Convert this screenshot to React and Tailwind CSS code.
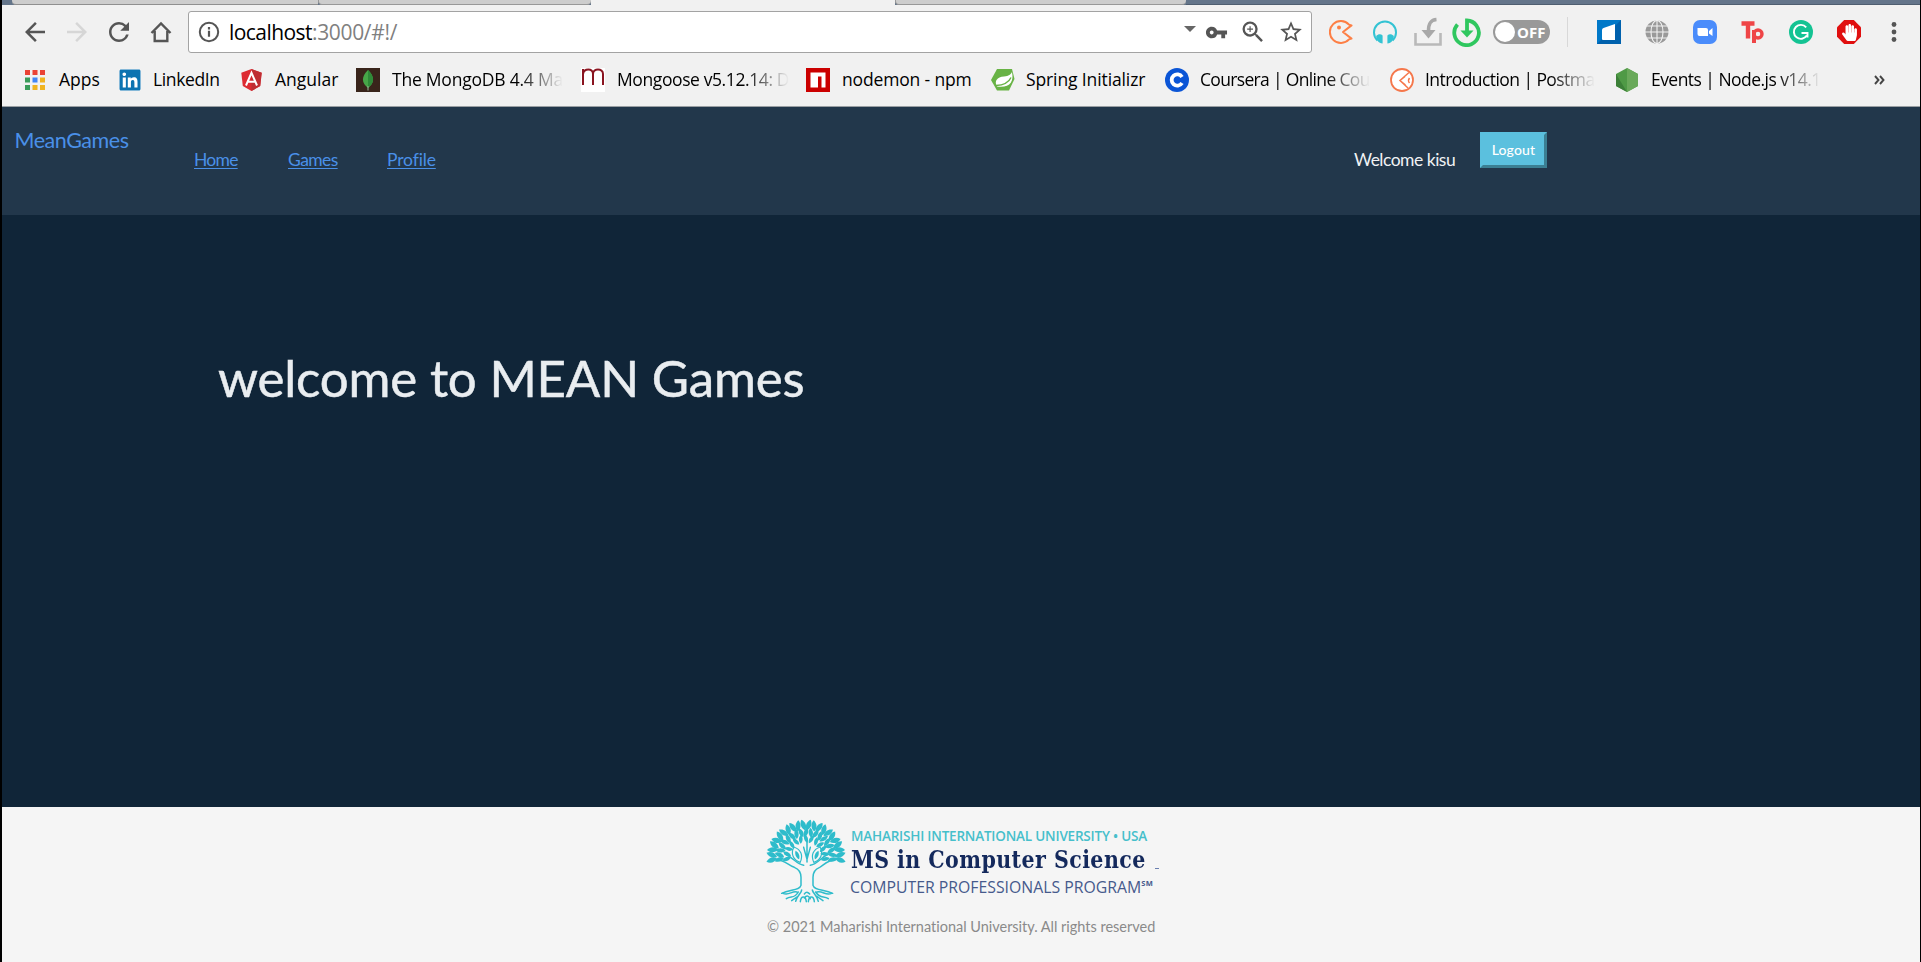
import React, { useLayoutEffect, useRef, useState } from "react";
import { MdArrowBack, MdArrowForward, MdRefresh, MdVpnKey, MdZoomIn, MdStarBorder } from "react-icons/md";
import { FaLinkedin, FaHandPaper } from "react-icons/fa";

// Adjusts letter spacing so that a single line of text fills `w` pixels.
function Fit({ w, className = "", children }) {
  const ref = useRef(null);
  const [spacing, setSpacing] = useState(0);
  useLayoutEffect(() => {
    const el = ref.current;
    const natural = el.offsetWidth;
    setSpacing((w - natural) / el.textContent.length);
  }, [w]);
  return (
    <span ref={ref} className={"inline-block whitespace-nowrap " + className} style={{ letterSpacing: spacing + "px" }}>
      {children}
    </span>
  );
}

function Svg({ w, h, className = "", children }) {
  return (
    <svg width={w} height={h} viewBox={`0 0 ${w} ${h}`} className={"block shrink-0 " + className} fill="none">
      {children}
    </svg>
  );
}

function TabStrip() {
  return (
    <div className="flex h-[5px] bg-[#64758a]">
      <div className="ml-[10px] h-[5px] w-[306px] rounded-bl-[4px] border-b border-[#8f8f8f] bg-[#cdcdcd]" />
      <div className="h-[5px] w-[273px] rounded-b-[4px] border-b border-l border-[#989898] bg-[#cdcdcd]" />
      <div className="h-[5px] w-[304px] bg-[#f1f1f1]" />
      <div className="h-[5px] w-[291px] rounded-b-[4px] border-b border-l border-[#989898] bg-[#cdcdcd]" />
      <div className="h-[5px] flex-1 border-b border-[#4f5e70] bg-[#64758a]" />
    </div>
  );
}

function Toolbar() {
  return (
    <div className="flex h-[54px] items-center text-[#555]">
      <MdArrowBack size={30} className="ml-[18px] shrink-0" />
      <MdArrowForward size={30} className="ml-3 shrink-0 text-[#d6d6d6]" />
      <MdRefresh size={30} className="ml-3 shrink-0" />
      <Svg w={22} h={22} className="ml-[16px]">
        <path d="M1.5 12 11 2.5 20.5 12M4.7 10v10h12.6V10" stroke="#555" strokeWidth="2.4" />
      </Svg>

      <div className="ml-[16px] flex h-[42px] w-[1124px] shrink-0 items-center rounded-[3px] border border-[#a3a3a3] bg-white">
        <Svg w={22} h={22} className="ml-[9px]">
          <circle cx="11" cy="11" r="9.2" stroke="#555" strokeWidth="2" />
          <path d="M11 9.8v6M11 6v2.4" stroke="#555" strokeWidth="2.2" />
        </Svg>
        <span className="ml-[9px] w-[170px] text-[21px] leading-7 text-[#808080]">
          <Fit w={83} className="text-black">localhost</Fit>
          <Fit w={85}>:3000/#!/</Fit>
        </span>
        <Svg w={12} h={6} className="mb-[6px] ml-[785px]">
          <path d="M0 0h12L6 6z" fill="#666" />
        </Svg>
        <MdVpnKey size={23} className="ml-[9px] shrink-0" />
        <MdZoomIn size={28} className="ml-[11px] shrink-0" />
        <MdStarBorder size={26} className="ml-[11px] shrink-0" />
      </div>

      <Svg w={24} h={24} className="ml-[17px]">
        <path d="M20 4.600A11 11 0 1 0 20 19.400L22.500 18.600 14 12 22.500 5.400Z" stroke="#fd7f45" strokeWidth="2" strokeLinejoin="round" />
        <circle cx="10" cy="7.5" r="2" fill="#fd7f45" />
      </Svg>
      <Svg w={24} h={24} className="ml-5">
        <path d="M4.500 20.500a11 11 0 1 1 15 0" stroke="#33c3d3" strokeWidth="2" />
        <path d="M9.600 15.500v8C5.500 23 3 20 3.200 16 5 14 8 13.800 9.600 15.500ZM14.400 15.500v8c4.100-.5 6.600-3.500 6.400-7.500-1.800-2-4.800-2.200-6.400-.5Z" fill="#33c3d3" />
      </Svg>
      <Svg w={28} h={30} className="ml-[17px]">
        <path d="M1.500 16v11.500h25V16" stroke="#b9b9b9" strokeWidth="2.600" />
        <path d="M22.500 2.500C16 3 14.500 7 14.500 14" stroke="#a8a8a8" strokeWidth="3.600" />
        <path d="M7.500 13h14l-7 8.500Z" fill="#a8a8a8" />
      </Svg>
      <Svg w={30} h={30} className="ml-[10px]">
        <path d="M5.500 7.500A12.300 12.300 0 1 0 15 3.500V17" stroke="#2fc75f" strokeWidth="3.800" />
        <path d="M8.500 13.500h13L15 20.500Z" fill="#2fc75f" />
      </Svg>
      <div className="ml-[11px] flex h-6 w-[57px] shrink-0 items-center rounded-full bg-[#999]">
        <span className="ml-[2px] size-5 rounded-full bg-white" />
        <Fit w={28} className="ml-[2px] text-[15px] leading-6 font-bold text-white">OFF</Fit>
      </div>
      <div className="ml-[17px] h-[30px] w-px bg-[#d8d8d8]" />
      <Svg w={24} h={24} className="ml-[29px]">
        <rect width="24" height="24" fill="#0078c8" />
        <path d="M0 24 24 0v24Z" fill="#0061ad" />
        <path d="M5 10Q5 8.500 6.500 8L18 4v16H6Q5 20 5 19Z" fill="#fff" />
      </Svg>
      <Svg w={24} h={24} className="ml-6">
        <circle cx="12" cy="12" r="11.500" fill="#999" />
        <path d="M12 0v24M0 12h24M2 6h20M2 18h20" stroke="#f1f1f1" strokeWidth="1.100" />
        <ellipse cx="12" cy="12" rx="6" ry="11.500" stroke="#f1f1f1" strokeWidth="1.100" />
      </Svg>
      <Svg w={24} h={24} className="ml-6">
        <rect width="24" height="24" rx="7" fill="#4a8cfb" />
        <path d="M4.500 8h8.500q2 0 2 2v6H6.500q-2 0-2-2ZM16 11l3.500-3v8L16 13.500Z" fill="#fff" />
      </Svg>
      <Svg w={24} h={24} className="ml-6">
        <path d="M.5 3.500h13M7 2v16.500" stroke="#ef4547" strokeWidth="4.400" />
        <path d="M13 10v13" stroke="#ef4547" strokeWidth="4" />
        <circle cx="17" cy="14" r="4" stroke="#ef4547" strokeWidth="3.400" />
      </Svg>
      <Svg w={24} h={24} className="ml-6">
        <circle cx="12" cy="12" r="12" fill="#14c393" />
        <path d="M17.200 7.300a7 7 0 1 0 .6 8.300M12.500 13h6v4.500" stroke="#fff" strokeWidth="1.900" />
      </Svg>
      <span className="ml-6 flex size-6 shrink-0 items-center justify-center bg-[#e00f0f] text-white [clip-path:polygon(30%_0,70%_0,100%_30%,100%_70%,70%_100%,30%_100%,0_70%,0_30%)]">
        <FaHandPaper size={17} />
      </span>
      <Svg w={6} h={22} className="ml-[30px]">
        <circle cx="3" cy="3.500" r="2.400" fill="#555" />
        <circle cx="3" cy="11" r="2.400" fill="#555" />
        <circle cx="3" cy="18.500" r="2.400" fill="#555" />
      </Svg>
    </div>
  );
}

function AppsIcon() {
  const colors = ["#ea4335", "#ea4335", "#ea4335", "#3a9c5a", "#4285f4", "#f0b421", "#3a9c5a", "#f0b421", "#f0b421"];
  return (
    <Svg w={20} h={20}>
      {colors.map((c, i) => (
        <rect key={i} x={(i % 3) * 7.5} y={Math.floor(i / 3) * 7.5} width="5" height="5" fill={c} />
      ))}
    </Svg>
  );
}

const fade = "[mask-image:linear-gradient(to_right,#000_74%,transparent_100%)]";

// slot: distance to the next bookmark's icon; gap: icon to label.
const bookmarks = [
  { slot: "w-[94px]", gap: "ml-[14px]", w: 41, label: "Apps", icon: <AppsIcon /> },
  {
    slot: "w-[122px]", gap: "ml-[12px]", w: 67, label: "LinkedIn",
    icon: (
      <span className="flex h-[22px] w-[22px] items-center justify-center rounded-[3px] bg-white text-[#0c73b1]">
        <FaLinkedin size={24} className="shrink-0" />
      </span>
    ),
  },
  {
    slot: "w-[115px]", gap: "ml-[13px]", w: 63, label: "Angular",
    icon: (
      <Svg w={21} h={22}>
        <path d="M10.500 0 20.700 3.700 19.200 17 10.500 22 1.800 17 .3 3.700Z" fill="#dd2b32" />
        <path d="M10.500 0 20.700 3.700 19.200 17 10.500 22Z" fill="#bf2e33" />
        <path d="M5 16.500 10.500 3.800 16 16.500M7.200 12.800h6.600" stroke="#fff" strokeWidth="2" />
      </Svg>
    ),
  },
  {
    slot: "w-[225px]", gap: "ml-[12px]", w: 171, label: "The MongoDB 4.4 Ma", faded: true,
    icon: (
      <Svg w={24} h={24}>
        <rect width="24" height="24" fill="#39241b" />
        <path d="M12 2c7 7 6.500 13 0 18-6.500-5-7-11 0-18Z" fill="#47a548" />
        <path d="M12 2c7 7 6.500 13 0 18Z" fill="#2f8a38" />
        <path d="M12 18v4.500" stroke="#9cb89a" strokeWidth="1" />
      </Svg>
    ),
  },
  {
    slot: "w-[225px]", gap: "ml-[12px]", w: 172, label: "Mongoose v5.12.14: D", faded: true,
    icon: (
      <Svg w={24} h={24}>
        <rect width="24" height="24" fill="#fff" />
        <path d="M2 17V1M2 6C3 0 12 0 12 6v11M12 6c0-6 10-6 10 0v11" stroke="#8a1420" strokeWidth="2" />
      </Svg>
    ),
  },
  {
    slot: "w-[185px]", gap: "ml-[12px]", w: 130, label: "nodemon - npm",
    icon: (
      <Svg w={24} h={24}>
        <rect width="24" height="24" fill="#cb0000" />
        <path d="M4.500 4.500h15v15h-4V8.500H12v11H4.500Z" fill="#fff" />
      </Svg>
    ),
  },
  {
    slot: "w-[174px]", gap: "ml-[11px]", w: 119, label: "Spring Initializr",
    icon: (
      <Svg w={24} h={24}>
        <path d="M6 1h15l2.500 10L18 22.500H6L0 12Z" fill="#68b345" />
        <path d="M21 4c2 10-2 16-15 14.500C3 13 6 9 13 8.500 18 8 19.500 6.500 21 4Z" fill="#fff" />
        <path d="M5 17.500c9-.5 13-3.500 15-8" stroke="#68b345" strokeWidth="1.400" />
      </Svg>
    ),
  },
  {
    slot: "w-[225px]", gap: "ml-[11px]", w: 170, label: "Coursera | Online Cou", faded: true,
    icon: (
      <Svg w={24} h={24}>
        <circle cx="12" cy="12" r="12" fill="#0b55d6" />
        <path d="M17 9a5.600 5.600 0 1 0 0 6" stroke="#fff" strokeWidth="3.800" />
      </Svg>
    ),
  },
  {
    slot: "w-[226px]", gap: "ml-[11px]", w: 170, label: "Introduction | Postma", faded: true,
    icon: (
      <Svg w={24} h={24}>
        <circle cx="12" cy="12" r="11" fill="#fff" stroke="#f5774b" strokeWidth="1.800" />
        <path d="M19 4.500 10 12.500 18 20M15 8.500 10 12.500l5.500 4.500M19.500 10q-2 2.500 0 5" stroke="#f5774b" strokeWidth="1.500" />
      </Svg>
    ),
  },
  {
    slot: "w-[258px]", gap: "ml-[13px]", w: 170, label: "Events | Node.js v14.1", faded: true,
    icon: (
      <Svg w={22} h={24}>
        <path d="M11 0 22 6v12l-11 6L0 18V6Z" fill="#4f9a46" />
        <path d="M11 0 22 6v12l-11 6Z" fill="#69a95a" />
        <path d="M0 6 11 24 0 18Z" fill="#3c8038" />
      </Svg>
    ),
  },
];

function Bookmarks() {
  return (
    <div className="flex h-12 border-b border-[#9a9fa3] pl-[23px] text-[17.5px] leading-6 text-black">
      {bookmarks.map((b) => (
        <div key={b.label} className={"flex h-[42px] shrink-0 items-center " + b.slot}>
          {b.icon}
          <span className={"mb-[2px] " + b.gap + " " + (b.faded ? fade : "")}>
            <Fit w={b.w}>{b.label}</Fit>
          </span>
        </div>
      ))}
      <span className="h-[42px] pt-[10px]">
        <Svg w={11} h={22}>
          <path d="m1 7 3.500 4L1 15M6 7l3.500 4L6 15" stroke="#444" strokeWidth="1.900" />
        </Svg>
      </span>
    </div>
  );
}

function SiteHeader() {
  return (
    <header className="flex h-[108px] items-start bg-[#22374b] text-[17.500px] leading-6 text-[#4a90e8]">
      <a className="mt-[21px] ml-[12.500px] w-[179.500px] text-[21.500px]">
        <Fit w={114}>MeanGames</Fit>
      </a>
      <nav className="mt-[41px] flex w-[1159px]">
        <a className="w-[94px]"><Fit w={44} className="underline decoration-1 underline-offset-2">Home</Fit></a>
        <a className="w-[99px]"><Fit w={50} className="underline decoration-1 underline-offset-2">Games</Fit></a>
        <a><Fit w={48} className="underline decoration-1 underline-offset-2">Profile</Fit></a>
      </nav>
      <span className="mt-[41px] ml-px w-[126px] text-[#f0f2f4]">
        <Fit w={101}>Welcome kisu</Fit>
      </span>
      <button className="mt-[25px] flex h-9 w-[67px] items-center justify-center border-[3px] border-[#5bc0de] border-r-[#3b7f93] border-b-[#3b7f93] bg-[#5bc0de] text-[14px] font-medium text-white">
        <Fit w={44}>Logout</Fit>
      </button>
    </header>
  );
}

function Leaf({ x, y, a, l, hw, open }) {
  return (
    <path
      transform={`translate(${x.toFixed(1)} ${y.toFixed(1)}) rotate(${a.toFixed(1)})`}
      d={`M0 ${l / 2}C${-hw} ${l / 5} ${-hw} ${-l / 5} 0 ${-l / 2}C${hw} ${-l / 5} ${hw} ${l / 5} 0 ${l / 2}Z`}
      fill={open ? "none" : "#2ebccb"}
      stroke={open ? "#2ebccb" : "none"}
      strokeWidth="3.500"
    />
  );
}

function TreeLogo() {
  const rings = [
    { n: 22, rx: 103, ry: 98, l: 34, hw: 10 },
    { n: 19, rx: 80, ry: 76, l: 30, hw: 8.5 },
    { n: 13, rx: 58, ry: 57, l: 27, hw: 7.5 },
  ];
  const leaves = rings.flatMap((r, k) =>
    Array.from({ length: r.n }, (_, i) => {
      const deg = -94 + (188 * i) / (r.n - 1);
      const t = (deg * Math.PI) / 180;
      return (
        <Leaf key={k + "-" + i} x={135 + r.rx * Math.sin(t)} y={143 - r.ry * Math.cos(t)} a={deg + (i % 2 ? 16 : -16)} l={r.l} hw={r.hw} />
      );
    })
  );
  return (
    <svg width="80" height="84" viewBox="15 27 240 252" className="block shrink-0" fill="none">
      {leaves}
      <g stroke="#2ebccb" strokeWidth="4.500" strokeLinecap="round" strokeLinejoin="round">
        <path d="M48 150C72 150 82 166 100 172 116 178 120 188 120 202V226C116 241 88 238 62 250" />
        <path d="M222 150C198 150 188 166 176 172 160 178 156 188 156 202V226C160 241 188 238 215 250" />
        <path d="M72 132C98 144 106 162 128 166M202 132C178 144 170 162 148 166" />
        <path d="M138 92V156M128 112 138 148 148 112" />
        <path d="M66 250C84 258 92 242 108 246M76 266C90 256 100 268 112 246M92 272 112 258M104 274C108 256 122 250 122 240" />
        <path d="M212 250C194 258 186 242 168 246M202 266C188 256 178 268 164 246M186 272 166 258M172 274C168 256 156 250 154 240" />
        <path d="M118 275C120 256 134 256 136 275M142 275C144 256 158 256 160 275M130 252C138 242 144 250 146 252M130 264C138 252 144 260 148 266" />
      </g>
      <Leaf x={108} y={134} a={-22} l={50} hw={17} open />
      <Leaf x={168} y={134} a={22} l={50} hw={17} open />
      <Leaf x={109} y={135} a={-22} l={28} hw={7} />
      <Leaf x={167} y={135} a={22} l={28} hw={7} />
    </svg>
  );
}

function SiteFooter() {
  return (
    <footer className="flex h-[155px] flex-col items-start bg-[#f5f5f5]">
      <div className="mt-3 ml-[764px] flex h-[84px] items-start">
        <TreeLogo />
        <div className="ml-[5px] flex w-[310px] flex-col">
          <span className="mt-[7px] text-[13.500px] leading-5 font-semibold text-[#46bfcb]">
            <Fit w={296}>MAHARISHI INTERNATIONAL UNIVERSITY • USA</Fit>
          </span>
          <span className="flex h-[31px] items-start font-['DejaVu_Serif',serif] text-[24.500px] leading-7 font-bold text-[#14295c]">
            <span className="w-[294px] origin-left scale-x-[0.84]">
              <Fit w={351}>MS in Computer Science</Fit>
            </span>
            <span className="mt-[22px] ml-[10px] h-px w-[4px] bg-[#6a7fb0]" />
          </span>
          <span className="flex items-start text-[15.800px] leading-5 text-[#465a8c]">
            <Fit w={291} className="-ml-px">COMPUTER PROFESSIONALS PROGRAM</Fit>
            <span className="text-[7.500px] leading-[12px] font-bold"><Fit w={12}>SM</Fit></span>
          </span>
        </div>
      </div>
      <p className="mt-[14px] ml-[765px] font-['Lato',sans-serif] text-[14.500px] leading-5 text-[#8a8a8a]">
        <Fit w={389}>© 2021 Maharishi International University. All rights reserved</Fit>
      </p>
    </footer>
  );
}

export default function App() {
  return (
    <div className="h-[962px] w-[1921px] overflow-hidden border-r border-l-2 border-black bg-[#f1f1f1] font-['Open_Sans',sans-serif]">
      <TabStrip />
      <Toolbar />
      <Bookmarks />
      <div className="font-['Lato',sans-serif]">
        <SiteHeader />
      </div>
      <main className="h-[592px] bg-[#102538] pt-[133px] pl-[216px] font-['Lato',sans-serif] text-[51px] leading-[60px] text-[#e9edf0]">
        <h1 className="font-normal [-webkit-text-stroke:0.5px_#e9edf0]">
          <Fit w={586}>welcome to MEAN Games</Fit>
        </h1>
      </main>
      <SiteFooter />
    </div>
  );
}
